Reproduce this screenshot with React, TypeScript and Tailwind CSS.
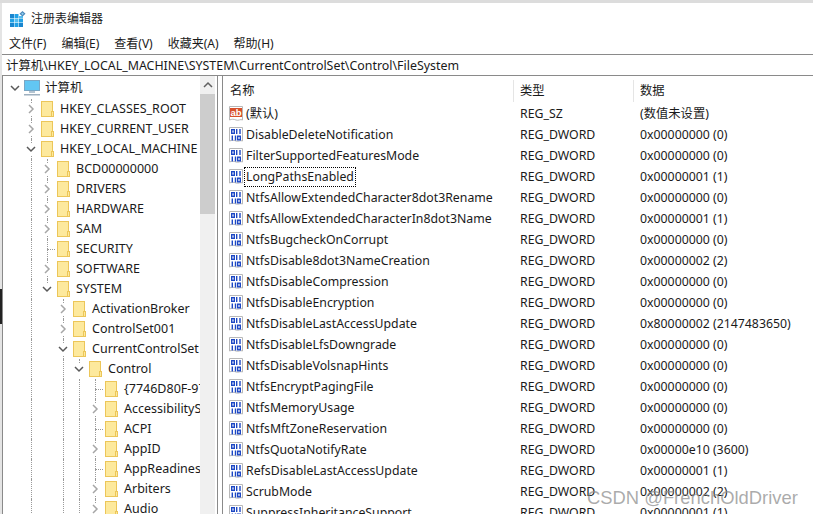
import React from "react";

const font = { fontFamily: '"Noto Sans", "Noto Sans CJK SC", sans-serif' };

type V = [string, string, string];
const rows: V[] = [
  ["DisableDeleteNotification", "REG_DWORD", "0x00000000 (0)"],
  ["FilterSupportedFeaturesMode", "REG_DWORD", "0x00000000 (0)"],
  ["LongPathsEnabled", "REG_DWORD", "0x00000001 (1)"],
  ["NtfsAllowExtendedCharacter8dot3Rename", "REG_DWORD", "0x00000000 (0)"],
  ["NtfsAllowExtendedCharacterIn8dot3Name", "REG_DWORD", "0x00000001 (1)"],
  ["NtfsBugcheckOnCorrupt", "REG_DWORD", "0x00000000 (0)"],
  ["NtfsDisable8dot3NameCreation", "REG_DWORD", "0x00000002 (2)"],
  ["NtfsDisableCompression", "REG_DWORD", "0x00000000 (0)"],
  ["NtfsDisableEncryption", "REG_DWORD", "0x00000000 (0)"],
  ["NtfsDisableLastAccessUpdate", "REG_DWORD", "0x80000002 (2147483650)"],
  ["NtfsDisableLfsDowngrade", "REG_DWORD", "0x00000000 (0)"],
  ["NtfsDisableVolsnapHints", "REG_DWORD", "0x00000000 (0)"],
  ["NtfsEncryptPagingFile", "REG_DWORD", "0x00000000 (0)"],
  ["NtfsMemoryUsage", "REG_DWORD", "0x00000000 (0)"],
  ["NtfsMftZoneReservation", "REG_DWORD", "0x00000000 (0)"],
  ["NtfsQuotaNotifyRate", "REG_DWORD", "0x00000e10 (3600)"],
  ["RefsDisableLastAccessUpdate", "REG_DWORD", "0x00000001 (1)"],
  ["ScrubMode", "REG_DWORD", "0x00000002 (2)"],
  ["SuppressInheritanceSupport", "REG_DWORD", "0x00000001 (1)"],
];

type T = [number, "o" | "c" | "n", string];
const tree: T[] = [
  [1, "c", "HKEY_CLASSES_ROOT"],
  [1, "c", "HKEY_CURRENT_USER"],
  [1, "o", "HKEY_LOCAL_MACHINE"],
  [2, "c", "BCD00000000"],
  [2, "c", "DRIVERS"],
  [2, "c", "HARDWARE"],
  [2, "c", "SAM"],
  [2, "n", "SECURITY"],
  [2, "c", "SOFTWARE"],
  [2, "o", "SYSTEM"],
  [3, "c", "ActivationBroker"],
  [3, "c", "ControlSet001"],
  [3, "o", "CurrentControlSet"],
  [4, "o", "Control"],
  [5, "n", "{7746D80F-97"],
  [5, "c", "AccessibilityS"],
  [5, "n", "ACPI"],
  [5, "c", "AppID"],
  [5, "n", "AppReadines"],
  [5, "c", "Arbiters"],
  [5, "c", "Audio"],
];

function Chevron({ open }: { open: boolean }) {
  return (
    <svg width="10" height="12" viewBox="0 0 10 12" className="shrink-0 bg-white relative z-10">
      {open ? (
        <path d="M1 4l4 4 4-4" fill="none" stroke="#595959" strokeWidth="1.500" />
      ) : (
        <path d="M3 2l4 4-4 4" fill="none" stroke="#a6a6a6" strokeWidth="1.500" />
      )}
    </svg>
  );
}

function Folder() {
  return (
    <svg width="13" height="16" viewBox="0 0 13 16" className="shrink-0 relative z-10">
      <rect x="0.500" y="0.500" width="11" height="15" fill="#fde99d" stroke="#ecc659" />
      <rect x="10.500" y="10.500" width="2" height="5" fill="#fde99d" stroke="#ecc659" />
    </svg>
  );
}

function DwordIcon() {
  return (
    <svg width="16" height="16" viewBox="0 0 16 16" className="shrink-0">
      <path d="M1.500 0.500h13v13.500c-2-1.200-4 1-6.500 0s-4-1-6.500 0z" fill="#fff" stroke="#b8b8b8" />
      <g fill="none" stroke="#1c47c4" strokeWidth="1.400">
        <rect x="3.700" y="2.700" width="2.600" height="3.600" />
        <path d="M8.700 2v5M12 2v5" />
        <path d="M4.300 8.500v5M7.500 8.500v5" />
        <rect x="9.700" y="9.200" width="2.600" height="3.600" />
      </g>
    </svg>
  );
}

function SzIcon() {
  return (
    <svg width="16" height="16" viewBox="0 0 16 16" className="shrink-0">
      <path d="M1.500 0.500h13v13.500c-2-1.200-4 1-6.500 0s-4-1-6.500 0z" fill="#fff" stroke="#b8b8b8" />
      <rect x="2" y="2" width="12" height="9" fill="#d8502a" />
      <text x="8" y="10" textAnchor="middle" fontSize="9.500" fontWeight="700" fill="#fff" fontFamily="Liberation Sans, sans-serif">
        ab
      </text>
    </svg>
  );
}

function AppIcon() {
  return (
    <svg width="16" height="16" viewBox="0 0 16 16" className="shrink-0">
      <g fill="#22a1e6">
        <rect x="0" y="3" width="4" height="4" fill="#1a86cf" />
        <rect x="4.500" y="3" width="4" height="4" />
        <rect x="9" y="5" width="4" height="2" fill="#54bdf0" />
        <rect x="0" y="7.500" width="4" height="4" />
        <rect x="4.500" y="7.500" width="4" height="4" fill="#54bdf0" />
        <rect x="9" y="7.500" width="4" height="4" />
        <rect x="0" y="12" width="4" height="4" fill="#1a86cf" />
        <rect x="4.500" y="12" width="4" height="4" />
        <rect x="9" y="12" width="4" height="4" fill="#1a86cf" />
      </g>
      <path d="M12.500 0l3 2.800-3 2.800-3-2.800z" fill="#4a86b8" />
      <path d="M12.500 1.600l1.300 1.200-1.300 1.200-1.300-1.200z" fill="#8fd0f2" />
    </svg>
  );
}

function Computer() {
  return (
    <svg width="17" height="17" viewBox="0 0 17 17" className="shrink-0">
      <rect x="0.500" y="0.500" width="15" height="10" fill="#62c6f3" stroke="#7aa6c4" />
      <rect x="5" y="11" width="6" height="2" fill="#b4c4d1" />
      <rect x="0" y="14" width="16" height="1.500" fill="#9eb0bf" />
    </svg>
  );
}

const indent: Record<number, string> = {
  1: "pl-[23px]",
  2: "pl-[39px]",
  3: "pl-[55px]",
  4: "pl-[71px]",
  5: "pl-[87px]",
};

function Guide({ x, half }: { x: string; half?: boolean }) {
  return <div className={`absolute top-0 w-0 border-l border-dotted border-l-[#9a9a9a] ${x} ${half ? "h-[10px]" : "h-[20px]"}`} />;
}

function Guides({ depth, last }: { depth: number; last: boolean }) {
  return (
    <>
      <Guide x="left-[28px]" />
      {depth === 2 && <Guide x="left-[44px]" half={last} />}
      {depth >= 3 && <Guide x="left-[60px]" />}
      {depth >= 4 && <Guide x="left-[76px]" half={depth === 4} />}
      {depth >= 5 && <Guide x="left-[92px]" />}
    </>
  );
}

const hLine: Record<number, string> = {
  2: "left-[44px] w-[8px]",
  5: "left-[92px] w-[8px]",
};

export default function App() {
  return (
    <div style={font} className="relative w-[813px] h-[514px] overflow-hidden bg-white text-[12.300px] leading-[20px] text-[#1a1a1a]">
      <div className="h-[3px] bg-[#dcdcdc]" />
      <div className="h-[31px] flex items-center gap-[5px] pl-[10px]">
        <AppIcon />
        <span className="text-[#222] text-[12px]">注册表编辑器</span>
      </div>
      <div className="h-[20px] flex items-center pl-[9px] gap-[15px] text-[12px]">
        <span>文件(F)</span>
        <span>编辑(E)</span>
        <span>查看(V)</span>
        <span>收藏夹(A)</span>
        <span>帮助(H)</span>
      </div>
      <div className="h-[22px] ml-[2px] border-y border-y-[#8a8a8a] flex items-center pt-[2px] pl-[4px] whitespace-nowrap text-[12.400px]">
        计算机\HKEY_LOCAL_MACHINE\SYSTEM\CurrentControlSet\Control\FileSystem
      </div>
      <div className="flex h-[438px] ml-[2px] overflow-hidden">
        <div className="w-[216px] shrink-0 flex border-l border-l-[#8a8a8a] border-r border-r-[#8a8a8a] overflow-hidden">
          <div className="w-[197px] shrink-0 overflow-hidden pt-[2px] text-[12.500px]">
            <div className="h-[20px] mb-[1px] flex items-center pl-[7px]">
              <Chevron open />
              <div className="ml-[4px]">
                <Computer />
              </div>
              <span className="ml-[4px]">计算机</span>
            </div>
            {tree.map(([d, s, label]) => (
              <div key={label} className={`relative h-[20px] flex items-center whitespace-nowrap ${indent[d]}`}>
                <Guides depth={d} last={label === "SYSTEM"} />
                {s === "n" && (d === 2 || d === 5) && (
                  <div className={`absolute top-[10px] h-0 border-t border-dotted border-t-[#9a9a9a] ${hLine[d]}`} />
                )}
                {s === "n" ? <div className="w-[10px] shrink-0" /> : <Chevron open={s === "o"} />}
                <div className="ml-[5px] flex">
                  <Folder />
                </div>
                <span className="ml-[6px]">{label}</span>
              </div>
            ))}
          </div>
          <div className="w-[15px] shrink-0 bg-[#f0f0f0] flex flex-col">
            <div className="h-[18px] flex items-center justify-center">
              <svg width="10" height="8" viewBox="0 0 10 8">
                <path d="M1 6l4-4 4 4" fill="none" stroke="#606060" strokeWidth="1.500" />
              </svg>
            </div>
            <div className="h-[120px] bg-[#cdcdcd]" />
          </div>
        </div>
        <div className="w-[4px] shrink-0" />
        <div className="flex-1 border-l border-l-[#8a8a8a] min-w-0">
          <div className="h-[27px] pt-[2px] flex items-center">
            <div className="w-[291px] pl-[7px] border-r border-r-[#e5e5e5] h-[22px] flex items-center">名称</div>
            <div className="w-[120px] pl-[6px] border-r border-r-[#e5e5e5] h-[22px] flex items-center">类型</div>
            <div className="pl-[6px]">数据</div>
          </div>
          <div className="h-[21px] flex items-center whitespace-nowrap">
            <div className="w-[291px] flex items-center pl-[5px] gap-[2px]">
              <SzIcon />
              <span>(默认)</span>
            </div>
            <div className="w-[120px] pl-[6px]">REG_SZ</div>
            <div className="pl-[6px]">(数值未设置)</div>
          </div>
          {rows.map(([n, t, v]) => (
            <div key={n} className="h-[21px] flex items-center whitespace-nowrap">
              <div className="w-[291px] flex items-center pl-[5px] gap-[2px]">
                <DwordIcon />
                <span className={n === "LongPathsEnabled" ? "outline-1 outline-dotted outline-black px-[1px] -ml-[1px] leading-[18px]" : ""}>{n}</span>
              </div>
              <div className="w-[120px] pl-[6px]">{t}</div>
              <div className="pl-[6px]">{v}</div>
            </div>
          ))}
        </div>
      </div>
      <div className="absolute left-0 top-[3px] bottom-0 w-[2px] bg-[#e4e4e4]" />
      <div className="absolute left-0 top-[289px] h-[35px] w-[2px] bg-[#222]" />
      <div style={{ fontFamily: '"Liberation Sans", sans-serif' }} className="absolute left-[587px] top-[487px] text-[18.400px] leading-[22px] text-[#8f8f8f]/75 whitespace-nowrap">
        CSDN @FrenchOldDriver
      </div>
    </div>
  );
}
